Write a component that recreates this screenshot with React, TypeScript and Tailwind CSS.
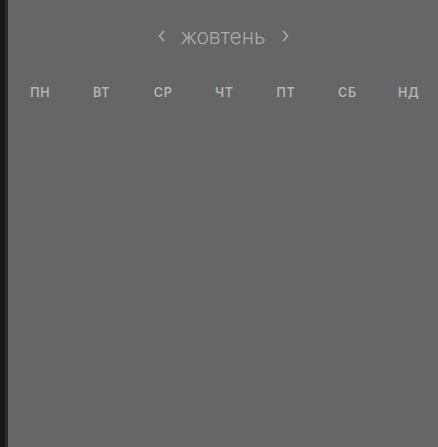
import React from "react";

const days = ["пн", "вт", "ср", "чт", "пт", "сб", "нд"];

export default function App() {
  return (
    <div className="flex h-[447px] w-[438px] bg-[#666666]" style={{ fontFamily: "Inter, 'Noto Sans', sans-serif" }}>
      <div className="h-full w-[5px] bg-[#171717]" />
      <div className="h-full w-[3px] bg-[#2b2b2b]" />
      <div className="flex flex-1 flex-col">
        <div className="flex h-[72px] items-center justify-center gap-[14px] text-[#a9a9a9]">
          <svg width="10" height="14" viewBox="0 0 10 14" fill="none" stroke="#a9a9a9" strokeWidth="1.6">
            <path d="M7 2 L2.5 7 L7 12" />
          </svg>
          <span className="text-[21px] font-light leading-none">жовтень</span>
          <svg width="10" height="14" viewBox="0 0 10 14" fill="none" stroke="#a9a9a9" strokeWidth="1.6">
            <path d="M3 2 L7.5 7 L3 12" />
          </svg>
        </div>
        <div className="grid grid-cols-7 pt-[12px]">
          {days.map((d) => (
            <div key={d} className="pl-[3px] text-center text-[12.5px] font-semibold uppercase tracking-[0.06em] text-[#b3b3b3]">
              {d}
            </div>
          ))}
        </div>
      </div>
    </div>
  );
}
